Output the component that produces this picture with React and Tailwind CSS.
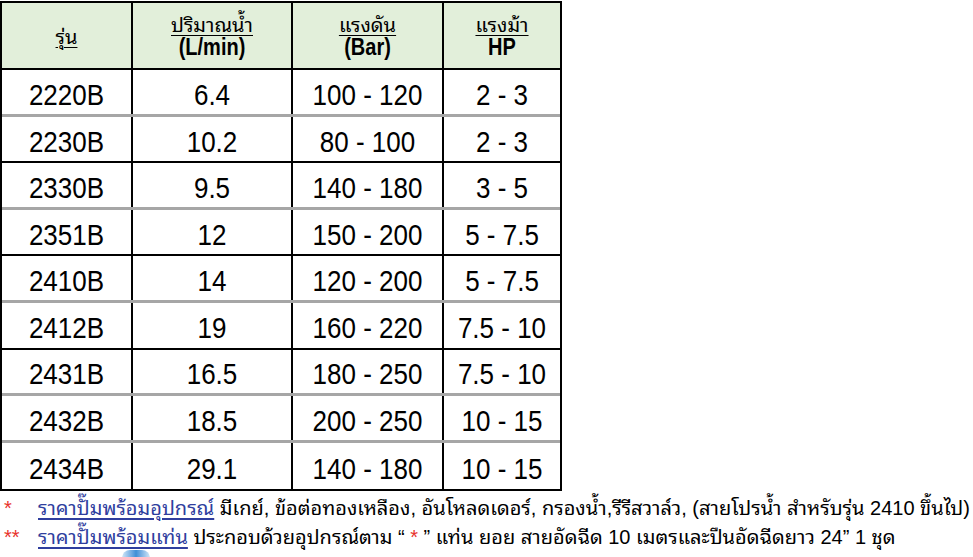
const rows = [
  ["2220B", "6.4", "100 - 120", "2 - 3", "grey"],
  ["2230B", "10.2", "80 - 100", "2 - 3", "black"],
  ["2330B", "9.5", "140 - 180", "3 - 5", "grey"],
  ["2351B", "12", "150 - 200", "5 - 7.5", "black"],
  ["2410B", "14", "120 - 200", "5 - 7.5", "grey"],
  ["2412B", "19", "160 - 220", "7.5 - 10", "black"],
  ["2431B", "16.5", "180 - 250", "7.5 - 10", "grey"],
  ["2432B", "18.5", "200 - 250", "10 - 15", "grey"],
  ["2434B", "29.1", "140 - 180", "10 - 15", "none"],
];

const cols = ["w-[131px] border-r-2 border-black", "w-[160px] border-r-2 border-black", "w-[151px] border-r-2 border-black", "w-[116px]"];

const thai = '"Liberation Sans", "Noto Sans Thai Looped", "Loma", "Garuda", "Norasi", "Noto Serif Thai", "Noto Sans Thai", sans-serif';

const Num = ({ children }) => (
  <span className="inline-block text-[26px] leading-none scale-y-[1.14] text-black">{children}</span>
);

const HeadTh = ({ children }) => (
  <span className="block text-[20px] leading-[22px] underline underline-offset-[3px] decoration-1">{children}</span>
);

const HeadEn = ({ children }) => (
  <span className="inline-block text-[20px] leading-[22px] font-bold scale-y-[1.2]">{children}</span>
);

export default function App() {
  return (
    <div className="w-[973px] h-[557px] bg-white relative overflow-hidden text-black" style={{ fontFamily: thai }}>
      <div className="w-[562px] mt-px border-2 border-black">
        <div className="flex h-[67px] bg-[#e2efda] border-b-2 border-black">
          <div className={`${cols[0]} flex items-center justify-center pt-[2px]`}>
            <HeadTh>รุ่น</HeadTh>
          </div>
          <div className={`${cols[1]} flex flex-col items-center justify-center`}>
            <HeadTh>ปริมาณน้ำ</HeadTh>
            <HeadEn>(L/min)</HeadEn>
          </div>
          <div className={`${cols[2]} flex flex-col items-center justify-center`}>
            <HeadTh>แรงดัน</HeadTh>
            <HeadEn>(Bar)</HeadEn>
          </div>
          <div className={`${cols[3]} flex flex-col items-center justify-center`}>
            <HeadTh>แรงม้า</HeadTh>
            <HeadEn>HP</HeadEn>
          </div>
        </div>
        {rows.map((r) => (
          <div
            key={r[0]}
            className={`flex h-[46.6px] ${
              r[4] === "grey"
                ? "border-b-[3px] border-[#a6a6a6]"
                : r[4] === "black"
                ? "border-b-2 border-black"
                : ""
            }`}
          >
            {r.slice(0, 4).map((v, i) => (
              <div key={i} className={`${cols[i]} flex items-center justify-center pt-[6px]`}>
                <Num>{v}</Num>
              </div>
            ))}
          </div>
        ))}
      </div>

      <div className="mt-[3px] text-[20px] leading-[29px]">
        <div className="flex">
          <span className="w-[38px] pl-[4px] text-[#e8322c]">*</span>
          <span className="whitespace-nowrap">
            <span className="text-[#2f3e9e] underline underline-offset-[3px]">ราคาปั๊มพร้อมอุปกรณ์</span>{" "}
            มีเกย์, ข้อต่อทองเหลือง, อันโหลดเดอร์, กรองน้ำ,รีรีสวาล์ว, (สายโปรน้ำ สำหรับรุ่น 2410 ขึ้นไป)
          </span>
        </div>
        <div className="flex">
          <span className="w-[38px] pl-[4px] text-[#e8322c]">**</span>
          <span className="whitespace-nowrap">
            <span className="text-[#2f3e9e] underline underline-offset-[3px]">ราคาปั๊มพร้อมแท่น</span>{" "}
            ประกอบด้วยอุปกรณ์ตาม “ <span className="text-[#e8322c]">*</span> ” แท่น ยอย สายอัดฉีด 10 เมตรและปืนอัดฉีดยาว 24” 1 ชุด
          </span>
        </div>
      </div>
      <div className="absolute left-[122px] top-[550px] w-[28px] h-[8px] rounded-t-full bg-gradient-to-r from-[#cfe6f7] via-[#3d8fd6] to-[#cfe6f7]" />
    </div>
  );
}
